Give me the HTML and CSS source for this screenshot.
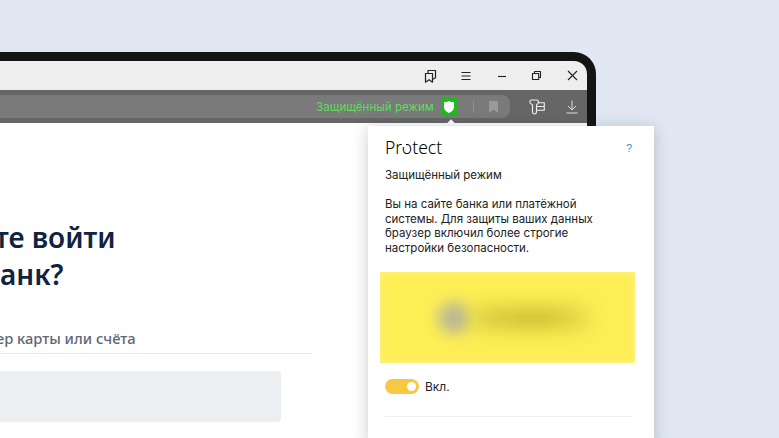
FILE: index.html
```html
<!DOCTYPE html>
<html lang="ru">
<head>
  <meta charset="UTF-8" />
  <title>Protect</title>
  <link rel="stylesheet" href="styles.css">
</head>
<body>
  <div class="laptop">
    <div class="tabbar">
      <span class="tool">
        <svg width="14" height="14" viewBox="0 0 14 14"><path d="M1.500 4.500h7v8.700l-3.500-2.400-3.500 2.400z M4 4.500V1.500h7.500v7.300l-3 1.700" fill="none" stroke="#222" stroke-width="1.200" stroke-linejoin="round"/></svg>
      </span>
      <span class="tool">
        <svg width="12" height="10" viewBox="0 0 12 10"><path d="M1.500 1.500h9M1.500 5h9M1.500 8.500h9" fill="none" stroke="#222" stroke-width="1.100"/></svg>
      </span>
      <span class="tool">
        <svg width="10" height="10" viewBox="0 0 10 10"><path d="M1 5.500h8" fill="none" stroke="#222" stroke-width="1.100"/></svg>
      </span>
      <span class="tool">
        <svg width="11" height="11" viewBox="0 0 11 11"><path d="M1.500 3.500h6.200v6H1.500z M3.500 3.500V1.500h6v6H7.700" fill="none" stroke="#222" stroke-width="1.100" stroke-linejoin="round"/></svg>
      </span>
      <span class="tool">
        <svg width="11" height="11" viewBox="0 0 11 11"><path d="M1 1l9 9M10 1l-9 9" fill="none" stroke="#222" stroke-width="1.100"/></svg>
      </span>
    </div>

    <div class="addressbar">
      <div class="pill">
        <span class="mode">Защищённый режим</span>
        <span class="shield">
          <svg width="10" height="12" viewBox="0 0 10 12"><path d="M0 1.200C2 1.200 3.500.8 5 0c1.500.8 3 1.200 5 1.200V6c0 3-2.400 4.900-5 6C2.400 10.900 0 9 0 6z" fill="#fff"/></svg>
        </span>
        <span class="sep"></span>
        <svg class="bookmark" width="9" height="12" viewBox="0 0 10 12" preserveAspectRatio="none"><path d="M0 0h10v12L5 8.600 0 12z" fill="#999"/></svg>
      </div>
      <div class="actions">
        <span class="tool">
          <svg width="16" height="16" viewBox="0 0 16 16"><path d="M2.500 1h5C8.600 1 9.500 1.900 9.500 3c0 1.300-.9 2.200-2 2.800V12.500C7.500 13.900 6.600 15 5.500 15S3.500 13.900 3.500 12.500V5.800C2.200 5.200.8 4.300.8 2.900.8 1.800 1.500 1 2.500 1z M9.300 3.800h6v7.500H7.700 M7.700 7.500h7.600" fill="none" stroke="#f1f1f1" stroke-width="1.100" stroke-linejoin="round"/></svg>
        </span>
        <span class="tool">
          <svg width="12" height="14" viewBox="0 0 12 14"><path d="M6 .5v9M1.800 5.800 6 10l4.200-4.200M.5 13h11" fill="none" stroke="#ddd" stroke-width="1"/></svg>
        </span>
      </div>
    </div>

    <div class="page">
      <div class="login">
        <h1>те войти<br>анк?</h1>
        <div class="tab-label">ер карты или счёта</div>
        <div class="field"></div>
      </div>

      <div class="popup-arrow"></div>
      <div class="popup">
        <div class="popup-head">
          <span class="logo">Pr<span class="logo-o">o</span>tect</span>
          <span class="help">?</span>
        </div>
        <p class="popup-title">Защищённый режим</p>
        <p class="popup-text">Вы на сайте банка или платёжной системы. Для защиты ваших данных браузер включил более строгие настройки безопасности.</p>
        <div class="preview">
          <span class="blur-dot"></span>
          <span class="blur-line"></span>
        </div>
        <div class="switch-row">
          <span class="switch"></span>
          <span>Вкл.</span>
        </div>
        <div class="divider"></div>
      </div>
    </div>
  </div>
</body>
</html>
```

FILE: styles.css
```css
html, body { margin: 0; height: 100%; overflow: hidden; }
body { background: #e1e8f3; font-family: 'Liberation Sans', sans-serif; color: #222; }

.laptop { width: 587px; height: 377px; margin-top: 52px; background: #141414; border: 9px solid #141414; border-left: none; border-bottom: none; border-radius: 0 22px 0 0; display: flex; flex-direction: column; }

.tool { width: 30px; display: flex; align-items: center; justify-content: center; }

.tabbar { height: 29px; flex: none; background: #eee; border-radius: 0 13px 0 0; display: flex; justify-content: flex-end; align-items: center; gap: 5.25px; }

.addressbar { height: 33px; flex: none; box-sizing: border-box; padding: 5px 0; background: #666; display: flex; }
.pill { flex: 1; background: #7a7a7a; border-radius: 0 8px 8px 0; display: flex; align-items: center; justify-content: flex-end; padding-right: 12px; }
.mode { color: #5fdd5c; font-family: Inter, sans-serif; font-size: 11.600px; margin-right: 7px; }
.shield { width: 17px; height: 17px; background: #22b81e; display: flex; align-items: center; justify-content: center; }
.sep { width: 1px; height: 13px; background: #8f8f8f; margin: 0 15px; }
.actions { display: flex; gap: 5.25px; padding-left: 12px; }

.page { flex: 1; background: #fff; position: relative; }

.login { width: 312px; padding-top: 96px; overflow: hidden; }
h1 { margin: 0; font-family: 'Noto Sans', sans-serif; font-weight: 600; font-size: 28px; line-height: 37px; color: #10233f; white-space: nowrap; text-indent: -5px; }
.tab-label { margin-top: 35px; padding-bottom: 4px; border-bottom: 1px solid #e8e9eb; font-family: 'Noto Sans', sans-serif; font-weight: 500; font-size: 14.700px; line-height: 21px; color: #5d6778; text-indent: -4px; }
.field { width: 281px; height: 51px; margin-top: 17px; background: #eceff2; border-radius: 0 4px 4px 0; }

.popup-arrow { position: absolute; left: 447px; top: -2px; width: 8px; height: 8px; background: #fff; transform: rotate(45deg); }
.popup { position: absolute; left: 368px; top: 3px; width: 286px; height: 320px; box-sizing: border-box; padding: 0 19px 0 12px; background: #fff; box-shadow: 0 2px 14px rgba(40, 50, 70, 0.25); }

.popup-head { height: 30px; padding: 6px 3px 0 5px; display: flex; justify-content: space-between; align-items: center; }
.logo { font-family: 'Noto Sans', sans-serif; font-weight: 300; font-size: 17.500px; color: #000; }
.logo-o { position: relative; }
.logo-o::after { content: ""; position: absolute; left: 0.500px; top: 8px; width: 4px; height: 3.500px; background: #fff; }
.help { color: #4a86d8; font-size: 11px; padding-top: 2px; }

.popup-title, .popup-text { margin: 0; padding: 0 5px; font-family: Inter, sans-serif; font-size: 11.500px; line-height: 14.400px; color: #222; }
.popup-title { margin-top: 6px; }
.popup-text { margin-top: 15px; }

.preview { width: 255px; height: 91px; margin-top: 17px; background: #fdee55; box-shadow: inset 0 0 8px rgba(255, 255, 255, 0.35); overflow: hidden; display: flex; align-items: center; padding-left: 58px; box-sizing: border-box; }
.blur-dot { width: 32px; height: 32px; flex: none; border-radius: 50%; background: #bcb995; filter: blur(7px); }
.blur-line { width: 120px; height: 20px; flex: none; border-radius: 10px; background: linear-gradient(90deg, #dccd45, #c4b52c 55%, #e6d748); filter: blur(10px); }

.switch-row { display: flex; align-items: center; gap: 6px; margin: 16px 0 0 5px; font-family: Inter, sans-serif; font-size: 12px; }
.switch { width: 34px; height: 15px; border-radius: 8px; background: #f6c945; position: relative; }
.switch::after { content: ""; position: absolute; right: 3px; top: 3px; width: 9px; height: 9px; border-radius: 50%; background: #fff; }

.divider { height: 1px; margin: 22px 2px 0 5px; background: #f0f0f0; }
```
